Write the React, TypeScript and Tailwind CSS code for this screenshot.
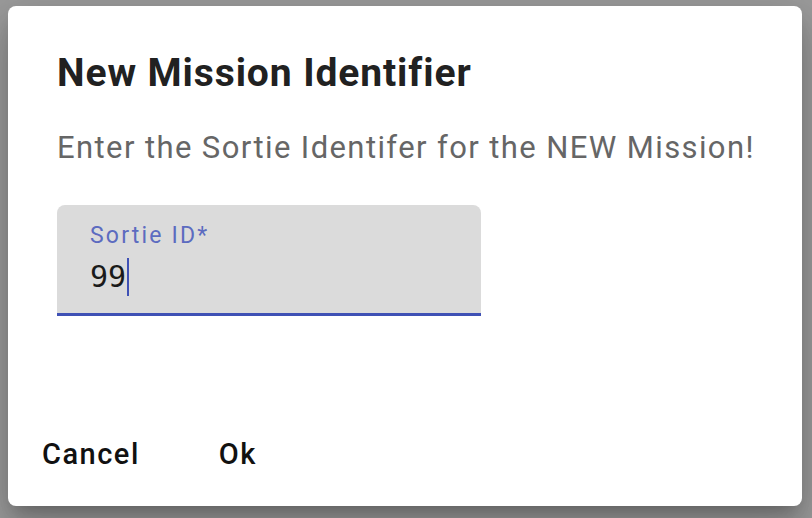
export default function App() {
  return (
    <div className="h-[518px] w-[812px] overflow-hidden bg-[#9c9c9c] pt-[6px] pl-[8px]">
      <div
        className="flex h-[500px] w-[794px] flex-col rounded-[8px] bg-white shadow-[0_11px_15px_-7px_rgba(0,0,0,0.2),0_24px_38px_3px_rgba(0,0,0,0.14),0_9px_46px_8px_rgba(0,0,0,0.12)]"
        style={{ fontFamily: "Roboto, 'Liberation Sans', sans-serif" }}
      >
        <h2 className="px-[49px] pt-[44px] text-[39px] font-bold leading-[46px] tracking-[0.9px] text-[#212121]">
          New Mission Identifier
        </h2>

        <div className="px-[49px] pt-[31px]">
          <p className="whitespace-nowrap text-[31px] leading-[42px] tracking-[1.4px] text-[#666666]">
            Enter the Sortie Identifer for the NEW Mission!
          </p>

          <div className="mt-[36px] h-[111px] w-[424px] rounded-t-[8px] border-b-[3px] border-[#3f51b5] bg-[#dbdbdb] px-[33px] pt-[18px]">
            <div className="text-[23px] leading-[26px] tracking-[2.2px] text-[#5c6bc0]">Sortie ID*</div>
            <div className="mt-[9px] flex items-center">
              <span
                className="text-[30px] leading-[38px] text-[#1a1a1a]"
                style={{ fontFamily: "'DejaVu Sans Mono', monospace" }}
              >
                99
              </span>
              <span className="ml-[1px] h-[38px] w-[2px] bg-[#3f51b5]" />
            </div>
          </div>
        </div>

        <div className="mt-auto flex items-center gap-[61px] px-[25px] pb-[30px]">
          <button className="px-[9px] text-[29px] font-medium tracking-[1.5px] text-[#111111]">Cancel</button>
          <button className="px-[9px] text-[29px] font-medium tracking-[1.5px] text-[#111111]">Ok</button>
        </div>
      </div>
    </div>
  );
}
